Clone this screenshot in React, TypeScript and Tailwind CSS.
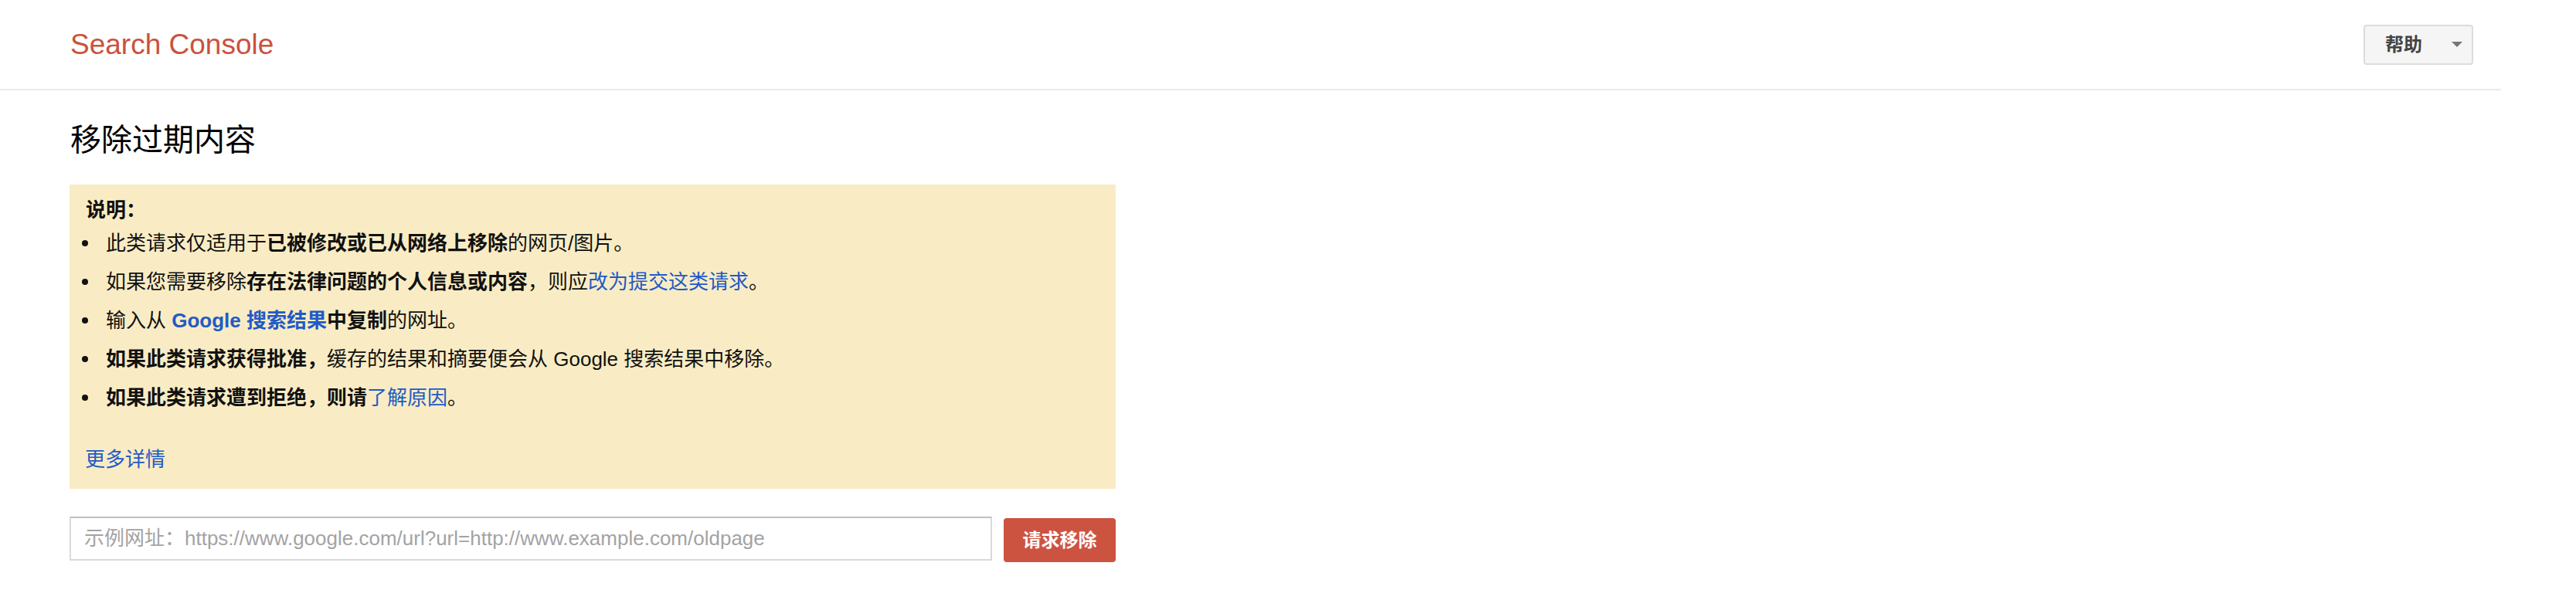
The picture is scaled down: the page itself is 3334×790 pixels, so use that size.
const font = { fontFamily: '"Liberation Sans", Arial, "Noto Sans CJK SC", sans-serif' };

const Dot = () => <div className="w-[8px] h-[8px] rounded-full bg-[#111] shrink-0" />;

const Link = ({ children, bold }: { children: React.ReactNode; bold?: boolean }) => (
  <a href="#" className={bold ? 'text-[#225ac8] font-bold' : 'text-[#225ac8]'}>
    {children}
  </a>
);

const Item = ({ children }: { children: React.ReactNode }) => (
  <li className="flex items-center gap-[23px] leading-[36px]">
    <Dot />
    <span>{children}</span>
  </li>
);

const App = () => {
  return (
    <div className="w-[3237px] bg-white text-[#111]" style={font}>
      <header className="h-[117px] flex items-center justify-between pl-[91px] pr-[36px] border-b-2 border-[#ebebeb]">
        <div className="text-[37px] text-[#cc513c] leading-none">Search Console</div>
        <button className="h-[52px] w-[142px] flex items-center justify-between pl-[26px] pr-[12px] bg-[#f5f5f5] border-2 border-[#dcdcdc] rounded-[4px]">
          <span className="text-[24px] font-bold text-[#444]">帮助</span>
          <span className="w-0 h-0 border-l-[7px] border-r-[7px] border-t-[7px] border-l-transparent border-r-transparent border-t-[#777]" />
        </button>
      </header>

      <main className="pl-[90px] pt-[40px]">
        <h1 className="text-[40px] leading-[48px] pl-[1px] text-black">移除过期内容</h1>

        <div className="mt-[34px] w-[1354px] bg-[#f9ecc4] pl-[16px] pt-[15px] pb-[20px] text-[26px]">
          <div className="font-bold leading-[36px] pl-[5px]">说明：</div>
          <ul className="mt-[7px] flex flex-col gap-[14px]">
            <Item>
              此类请求仅适用于<b>已被修改或已从网络上移除</b>的网页/图片。
            </Item>
            <Item>
              如果您需要移除<b>存在法律问题的个人信息或内容</b>，则应<Link>改为提交这类请求</Link>。
            </Item>
            <Item>
              输入从 <Link bold>Google 搜索结果</Link><b>中复制</b>的网址。
            </Item>
            <Item>
              <b>如果此类请求获得批准，</b>缓存的结果和摘要便会从 Google 搜索结果中移除。
            </Item>
            <Item>
              <b>如果此类请求遭到拒绝，则请</b><Link>了解原因</Link>。
            </Item>
          </ul>
          <div className="mt-[44px] leading-[36px] pl-[4px]">
            <Link>更多详情</Link>
          </div>
        </div>

        <div className="mt-[36px] flex items-start gap-[15px]">
          <input
            className="w-[1194px] h-[57px] pl-[17px] text-[26px] bg-white border-2 border-[#d9d9d9] border-t-[#c0c0c0] outline-none placeholder:text-[#a3a3a3]"
            style={font}
            placeholder="示例网址：https://www.google.com/url?url=http://www.example.com/oldpage"
          />
          <button className="mt-[2px] w-[145px] h-[57px] bg-[#cd5341] rounded-[4px] text-white text-[24px] font-bold">
            请求移除
          </button>
        </div>
      </main>
    </div>
  );
};

export default App;
